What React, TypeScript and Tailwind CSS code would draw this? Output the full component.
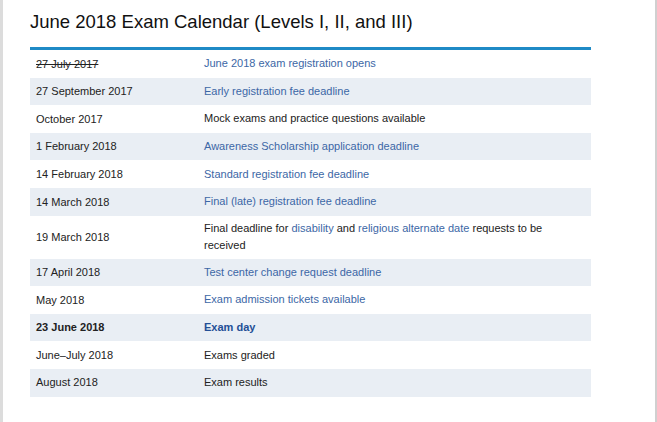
import React from "react";

type Part = { text: string; link?: boolean };

interface RowI {
  date: string;
  event: Part[];
  strike?: boolean;
  bold?: boolean;
  tall?: boolean;
}

const rows: RowI[] = [
  { date: "27 July 2017", strike: true, event: [{ text: "June 2018 exam registration opens", link: true }] },
  { date: "27 September 2017", event: [{ text: "Early registration fee deadline", link: true }] },
  { date: "October 2017", event: [{ text: "Mock exams and practice questions available" }] },
  { date: "1 February 2018", event: [{ text: "Awareness Scholarship application deadline", link: true }] },
  { date: "14 February 2018", event: [{ text: "Standard registration fee deadline", link: true }] },
  { date: "14 March 2018", event: [{ text: "Final (late) registration fee deadline", link: true }] },
  {
    date: "19 March 2018",
    tall: true,
    event: [
      { text: "Final deadline for " },
      { text: "disability", link: true },
      { text: " and " },
      { text: "religious alternate date", link: true },
      { text: " requests to be received" },
    ],
  },
  { date: "17 April 2018", event: [{ text: "Test center change request deadline", link: true }] },
  { date: "May 2018", event: [{ text: "Exam admission tickets available", link: true }] },
  { date: "23 June 2018", bold: true, event: [{ text: "Exam day", link: true }] },
  { date: "June–July 2018", event: [{ text: "Exams graded" }] },
  { date: "August 2018", event: [{ text: "Exam results" }] },
];

const App = () => {
  return (
    <div className="w-[657px] h-[422px] bg-white border-l-[3px] border-r-2 border-l-[#dcdcdc] border-r-[#d0d0d0] font-['Liberation_Sans',Arial,sans-serif] text-[#222]">
      <div className="pl-[27px] pt-[9px]">
        <h1 className="text-[18.5px] leading-[26px] text-[#111]">
          June 2018 Exam Calendar (Levels I, II, and III)
        </h1>
        <div className="mt-[12px] w-[561px] h-[3px] bg-[#1f8ac6]" />
        <div className="w-[561px] text-[11px]">
          {rows.map((row, i) => (
            <div
              key={i}
              className={`flex items-center ${row.tall ? "h-[43px]" : "h-[27.6px]"} ${
                i % 2 === 1 ? "bg-[#e9eef4]" : "bg-white"
              } ${row.bold ? "font-bold" : ""}`}
            >
              <div className={`w-[174px] pl-[6px] shrink-0 ${row.strike ? "line-through" : ""}`}>
                {row.date}
              </div>
              <p className="pr-[40px] leading-[17px]">
                {row.event.map((p, j) =>
                  p.link ? (
                    <span key={j} className={row.bold ? "text-[#234f96]" : "text-[#3c67a6]"}>
                      {p.text}
                    </span>
                  ) : (
                    <React.Fragment key={j}>{p.text}</React.Fragment>
                  )
                )}
              </p>
            </div>
          ))}
        </div>
      </div>
    </div>
  );
};

export default App;
